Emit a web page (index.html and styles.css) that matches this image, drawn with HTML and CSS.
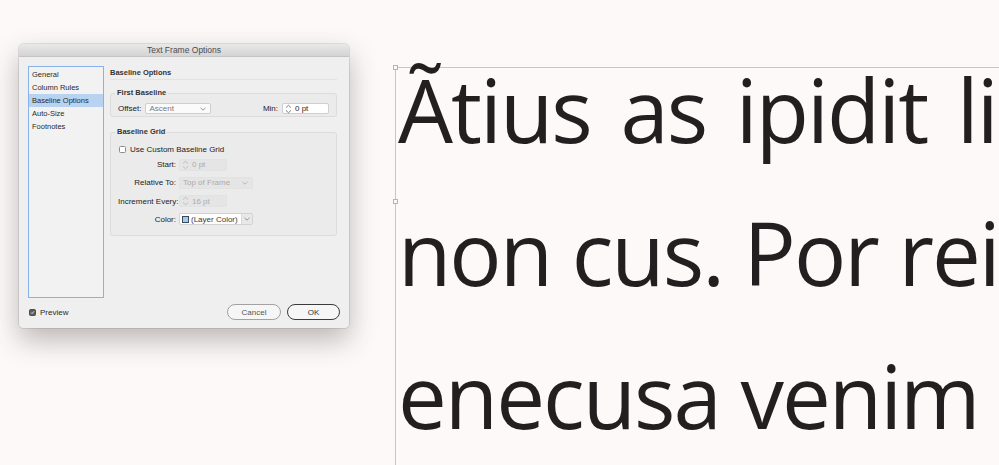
FILE: index.html
```html
<!DOCTYPE html>
<html lang="en">
<head>
<meta charset="utf-8">
<title>Text Frame Options</title>
<link rel="stylesheet" href="styles.css">
</head>
<body>
<div class="canvas">
  <div class="frame">
    <span class="handle handle-top"></span>
    <span class="handle handle-mid"></span>
    <div class="story">
      <p class="line line-loose">Ãtius as ipidit li</p>
      <p class="line">non cus. Por rei</p>
      <p class="line">enecusa venim</p>
    </div>
  </div>
</div>

<div class="dialog">
  <div class="titlebar">Text Frame Options</div>
  <div class="dialog-body">
    <div class="content">
      <ul class="sidebar">
        <li class="item">General</li>
        <li class="item">Column Rules</li>
        <li class="item selected">Baseline Options</li>
        <li class="item">Auto-Size</li>
        <li class="item">Footnotes</li>
      </ul>
      <div class="panel">
        <div class="panel-title">Baseline Options</div>
        <fieldset class="group group-first">
          <legend class="legend">First Baseline</legend>
          <div class="first-row">
            <span class="label">Offset:</span>
            <div class="select select-offset">
              <span class="select-text">Ascent</span>
              <svg class="chev" width="6" height="4" viewBox="0 0 6 4"><path d="M0.5 0.8 L3 3.2 L5.5 0.8" fill="none" stroke="#8a8a8a" stroke-width="0.9"/></svg>
            </div>
            <span class="spacer"></span>
            <span class="label">Min:</span>
            <div class="spinner spinner-min">
              <svg class="spin" width="7" height="10" viewBox="0 0 7 10"><path d="M1 3.6 L3.5 1.2 L6 3.6 M1 6.4 L3.5 8.8 L6 6.4" fill="none" stroke="#6f6f6f" stroke-width="0.9"/></svg>
              <span class="spin-text">0 pt</span>
            </div>
          </div>
        </fieldset>
        <fieldset class="group group-grid">
          <legend class="legend">Baseline Grid</legend>
          <label class="check-row">
            <span class="checkbox"></span>
            <span class="check-text">Use Custom Baseline Grid</span>
          </label>
          <div class="grid-form">
            <span class="label">Start:</span>
            <div class="spinner disabled">
              <svg class="spin" width="7" height="10" viewBox="0 0 7 10"><path d="M1 3.6 L3.5 1.2 L6 3.6 M1 6.4 L3.5 8.8 L6 6.4" fill="none" stroke="#b9b9b9" stroke-width="0.9"/></svg>
              <span class="spin-text">0 pt</span>
            </div>
            <span class="label">Relative To:</span>
            <div class="select select-wide disabled">
              <span class="select-text">Top of Frame</span>
              <svg class="chev" width="6" height="4" viewBox="0 0 6 4"><path d="M0.5 0.8 L3 3.2 L5.5 0.8" fill="none" stroke="#b0b0b0" stroke-width="0.9"/></svg>
            </div>
            <span class="label">Increment Every:</span>
            <div class="spinner disabled">
              <svg class="spin" width="7" height="10" viewBox="0 0 7 10"><path d="M1 3.6 L3.5 1.2 L6 3.6 M1 6.4 L3.5 8.8 L6 6.4" fill="none" stroke="#b9b9b9" stroke-width="0.9"/></svg>
              <span class="spin-text">16 pt</span>
            </div>
            <span class="label">Color:</span>
            <div class="color-select">
              <div class="color-main">
                <span class="swatch"></span>
                <span class="color-text">(Layer Color)</span>
              </div>
              <div class="color-arrow">
                <svg class="chev" width="6" height="4" viewBox="0 0 6 4"><path d="M0.5 0.8 L3 3.2 L5.5 0.8" fill="none" stroke="#8a8a8a" stroke-width="0.9"/></svg>
              </div>
            </div>
          </div>
        </fieldset>
      </div>
    </div>
    <div class="footer">
      <label class="preview">
        <span class="checkbox checked">
          <svg width="7" height="7" viewBox="0 0 7 7"><path d="M1.4 3.6 L2.9 5.1 L5.7 1.8" fill="none" stroke="#ffffff" stroke-width="1.1"/></svg>
        </span>
        <span class="preview-text">Preview</span>
      </label>
      <div class="buttons">
        <button class="btn btn-cancel">Cancel</button>
        <button class="btn btn-ok">OK</button>
      </div>
    </div>
  </div>
</div>
</body>
</html>
```

FILE: styles.css
```css
* {
  box-sizing: border-box;
}

html, body {
  margin: 0;
  padding: 0;
}

body {
  width: 999px;
  height: 465px;
  overflow: hidden;
  background: #fcf9f8;
  position: relative;
  font-family: "Liberation Sans", Arial, sans-serif;
}

/* ---------- document canvas ---------- */
.canvas {
  width: 999px;
  height: 465px;
  padding: 67px 0 0 395px;
}

.frame {
  position: relative;
  height: 100%;
  border-top: 1px solid #a3d0f4;
  border-left: 1px solid #a3d0f4;
}

.handle {
  position: absolute;
  left: -3px;
  width: 5px;
  height: 5px;
  border: 1px solid #86c0ee;
  background: #fcf9f8;
}

.handle-top {
  top: -3px;
}

.handle-mid {
  top: 131px;
}

.story {
  margin-top: -30px;
  padding-left: 2px;
  overflow: hidden;
  white-space: nowrap;
}

.line {
  margin: 0;
  font-family: "Open Sans", "Noto Sans", sans-serif;
  font-size: 87px;
  line-height: 143px;
  letter-spacing: -2px;
  color: #231f20;
}

.line-loose {
  word-spacing: 9px;
}

/* ---------- dialog ---------- */
.dialog {
  position: absolute;
  left: 19px;
  top: 44px;
  width: 330px;
  height: 284px;
  background: #efefef;
  border-radius: 4px;
  box-shadow: 0 0 0 0.5px rgba(0, 0, 0, 0.18), 0 12px 28px rgba(60, 50, 50, 0.33);
  overflow: hidden;
  color: #2a2a2a;
  font-size: 8px;
}

.titlebar {
  height: 13px;
  background: linear-gradient(#e9e9e9, #d4d4d4);
  border-bottom: 1px solid #c4c4c4;
  text-align: center;
  line-height: 13px;
  font-size: 8.5px;
  color: #4b4b4b;
}

.dialog-body {
  padding: 9px 9px 0 9px;
}

.content {
  display: flex;
  gap: 6px;
  height: 232px;
  padding-right: 3px;
}

.sidebar {
  list-style: none;
  margin: 0;
  padding: 1px 0 0;
  width: 76px;
  height: 232px;
  border: 1px solid #88b3ea;
  background: #f2f2f2;
}

.item {
  height: 13px;
  line-height: 13px;
  padding-left: 3px;
  font-size: 7.5px;
  color: #2a2a2a;
}

.item.selected {
  background: #b8d3f1;
}

.panel {
  flex: 1;
  display: flex;
  flex-direction: column;
}

.panel-title {
  height: 14px;
  line-height: 14px;
  font-weight: bold;
  font-size: 7.5px;
  color: #333;
  border-bottom: 1px solid #e2e2e2;
  margin-bottom: 8px;
}

.group {
  margin: 0;
  border: 1px solid #dcdcdc;
  border-radius: 3px;
  background: #ebebeb;
  padding: 0 7px;
  min-width: 0;
}

.legend {
  margin-left: -3px;
  padding: 0 2px;
  line-height: 10px;
  font-weight: bold;
  font-size: 7.5px;
  color: #333;
}

.group-first {
  padding-top: 5px;
  padding-bottom: 2px;
}

.group-grid {
  margin-top: 10px;
  padding-top: 6.5px;
  padding-bottom: 10px;
}

.first-row {
  display: flex;
  align-items: center;
  height: 11px;
}

.label {
  font-size: 8px;
  color: #222;
  white-space: nowrap;
}

.first-row .label {
  margin-right: 4px;
}

.spacer {
  flex: 1;
}

.select {
  display: flex;
  align-items: center;
  justify-content: space-between;
  height: 11px;
  padding: 0 4px 0 3px;
  background: #fbfbfb;
  border: 1px solid #cfcfcf;
  border-radius: 2px;
  color: #7a7a7a;
}

.select-offset {
  width: 66px;
}

.select-wide {
  width: 74px;
  height: 12px;
}

.spinner {
  display: flex;
  align-items: center;
  height: 11px;
  padding-left: 2px;
  background: #ffffff;
  border: 1px solid #cfcfcf;
  border-radius: 2px;
  color: #2a2a2a;
}

.spinner-min {
  width: 47px;
}

.spin {
  flex: none;
  margin-right: 3px;
}

.spin-text,
.select-text,
.color-text,
.check-text,
.preview-text {
  white-space: nowrap;
}

.grid-form .spinner {
  width: 48px;
  height: 12px;
}

.disabled {
  background: #e5e5e5;
  border-color: #e2e2e2;
  color: #ababab;
}

.check-row {
  display: flex;
  align-items: center;
  gap: 4px;
  height: 11px;
  padding-left: 1px;
  margin-bottom: 4px;
  color: #222;
}

.checkbox {
  display: flex;
  align-items: center;
  justify-content: center;
  width: 7px;
  height: 7px;
  border: 1px solid #8d8d8d;
  border-radius: 1.5px;
  background: #ffffff;
}

.checkbox.checked {
  background: #5b5b5b;
  border-color: #4d4d4d;
}

.grid-form {
  display: grid;
  grid-template-columns: 58px auto;
  justify-content: start;
  align-items: center;
  column-gap: 3px;
  row-gap: 6.3px;
}

.grid-form .label {
  text-align: right;
}

.color-select {
  display: flex;
  width: 74px;
  height: 12px;
  border: 1px solid #d2d2d2;
  border-radius: 2px;
  background: #ffffff;
}

.color-main {
  flex: 1;
  display: flex;
  align-items: center;
  gap: 2px;
  padding-left: 2px;
  color: #3a3a3a;
}

.swatch {
  width: 7px;
  height: 7px;
  background: #9fcbf3;
  border: 1px solid #3d4a5a;
}

.color-arrow {
  width: 11px;
  display: flex;
  align-items: center;
  justify-content: center;
  background: #e8e8e8;
  border-left: 1px solid #dadada;
}

/* ---------- footer ---------- */
.footer {
  display: flex;
  align-items: center;
  justify-content: space-between;
  margin-top: 6px;
  height: 16px;
  padding-left: 1px;
}

.preview {
  display: flex;
  align-items: center;
  gap: 4px;
  font-size: 8px;
  color: #2a2a2a;
}

.buttons {
  display: flex;
  gap: 6px;
}

.btn {
  height: 16px;
  width: 54px;
  border-radius: 8px;
  font-family: "Liberation Sans", Arial, sans-serif;
  font-size: 8px;
  padding: 0;
  background: #f6f6f6;
}

.btn-cancel {
  border: 1px solid #a2a2a2;
  color: #555;
}

.btn-ok {
  width: 53px;
  border: 1.3px solid #3b3b3b;
  color: #333;
}
```
